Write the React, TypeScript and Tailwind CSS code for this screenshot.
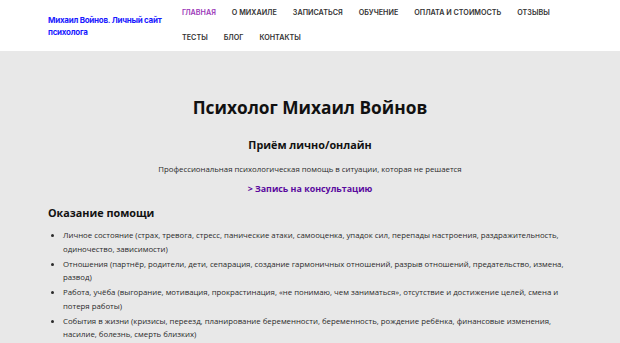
import React from "react";

const nav1 = ["ГЛАВНАЯ", "О МИХАИЛЕ", "ЗАПИСАТЬСЯ", "ОБУЧЕНИЕ", "ОПЛАТА И СТОИМОСТЬ", "ОТЗЫВЫ"];
const nav2 = ["ТЕСТЫ", "БЛОГ", "КОНТАКТЫ"];

const items = [
  "Личное состояние (страх, тревога, стресс, панические атаки, самооценка, упадок сил, перепады настроения, раздражительность, одиночество, зависимости)",
  "Отношения (партнёр, родители, дети, сепарация, создание гармоничных отношений, разрыв отношений, предательство, измена, развод)",
  "Работа, учёба (выгорание, мотивация, прокрастинация, «не понимаю, чем заниматься», отсутствие и достижение целей, смена и потеря работы)",
  "События в жизни (кризисы, переезд, планирование беременности, беременность, рождение ребёнка, финансовые изменения, насилие, болезнь, смерть близких)",
];

export default function App() {
  return (
    <div className="w-[620px] h-[343px] overflow-hidden bg-[#e8e8e8]" style={{ fontFamily: "'Open Sans', sans-serif" }}>
      <header className="bg-white h-[51px] flex pl-[48px]">
        <div className="w-[134px] pt-[14px] pr-[4px] text-[8px] leading-[12px] font-bold text-[#1a1aff] tracking-[-0.25px]" style={{ fontFamily: "Inter, sans-serif" }}>
          Михаил Войнов. Личный сайт психолога
        </div>
        <nav className="flex flex-col" style={{ fontFamily: "Inter, sans-serif" }}>
          <div className="flex gap-[16px] h-[26px] items-center text-[7.2px] font-semibold text-[#333]">
            {nav1.map((n, i) => (
              <span key={n} className={i === 0 ? "text-[#9b37b8]" : ""}>{n}</span>
            ))}
          </div>
          <div className="flex gap-[16px] h-[24px] items-center text-[7.2px] font-semibold text-[#333]">
            {nav2.map((n) => (
              <span key={n}>{n}</span>
            ))}
          </div>
        </nav>
      </header>
      <main className="px-[48px] text-[#222]">
        <h1 className="text-center text-[17.3px] font-bold text-[#111] mt-[45px] leading-[24px]">Психолог Михаил Войнов</h1>
        <h2 className="text-center text-[10.8px] font-bold text-[#111] mt-[18px] leading-[14px]">Приём лично/онлайн</h2>
        <p className="text-center text-[7.8px] font-medium mt-[11.5px] leading-[11px] text-[#2a2a2a]">
          Профессиональная психологическая помощь в ситуации, которая не решается
        </p>
        <p className="text-center text-[8.9px] font-bold mt-[8.5px] leading-[12px] text-[#5a0a9e]">&gt; Запись на консультацию</p>
        <h3 className="text-[10.8px] font-bold text-[#111] mt-[11px] leading-[14px]">Оказание помощи</h3>
        <ul className="mt-[9px] pl-[15px] list-disc text-[7.8px] font-medium leading-[13.5px] text-[#2a2a2a]">
          {items.map((t) => (
            <li key={t} className="mb-[1.5px]">{t}</li>
          ))}
        </ul>
      </main>
    </div>
  );
}
